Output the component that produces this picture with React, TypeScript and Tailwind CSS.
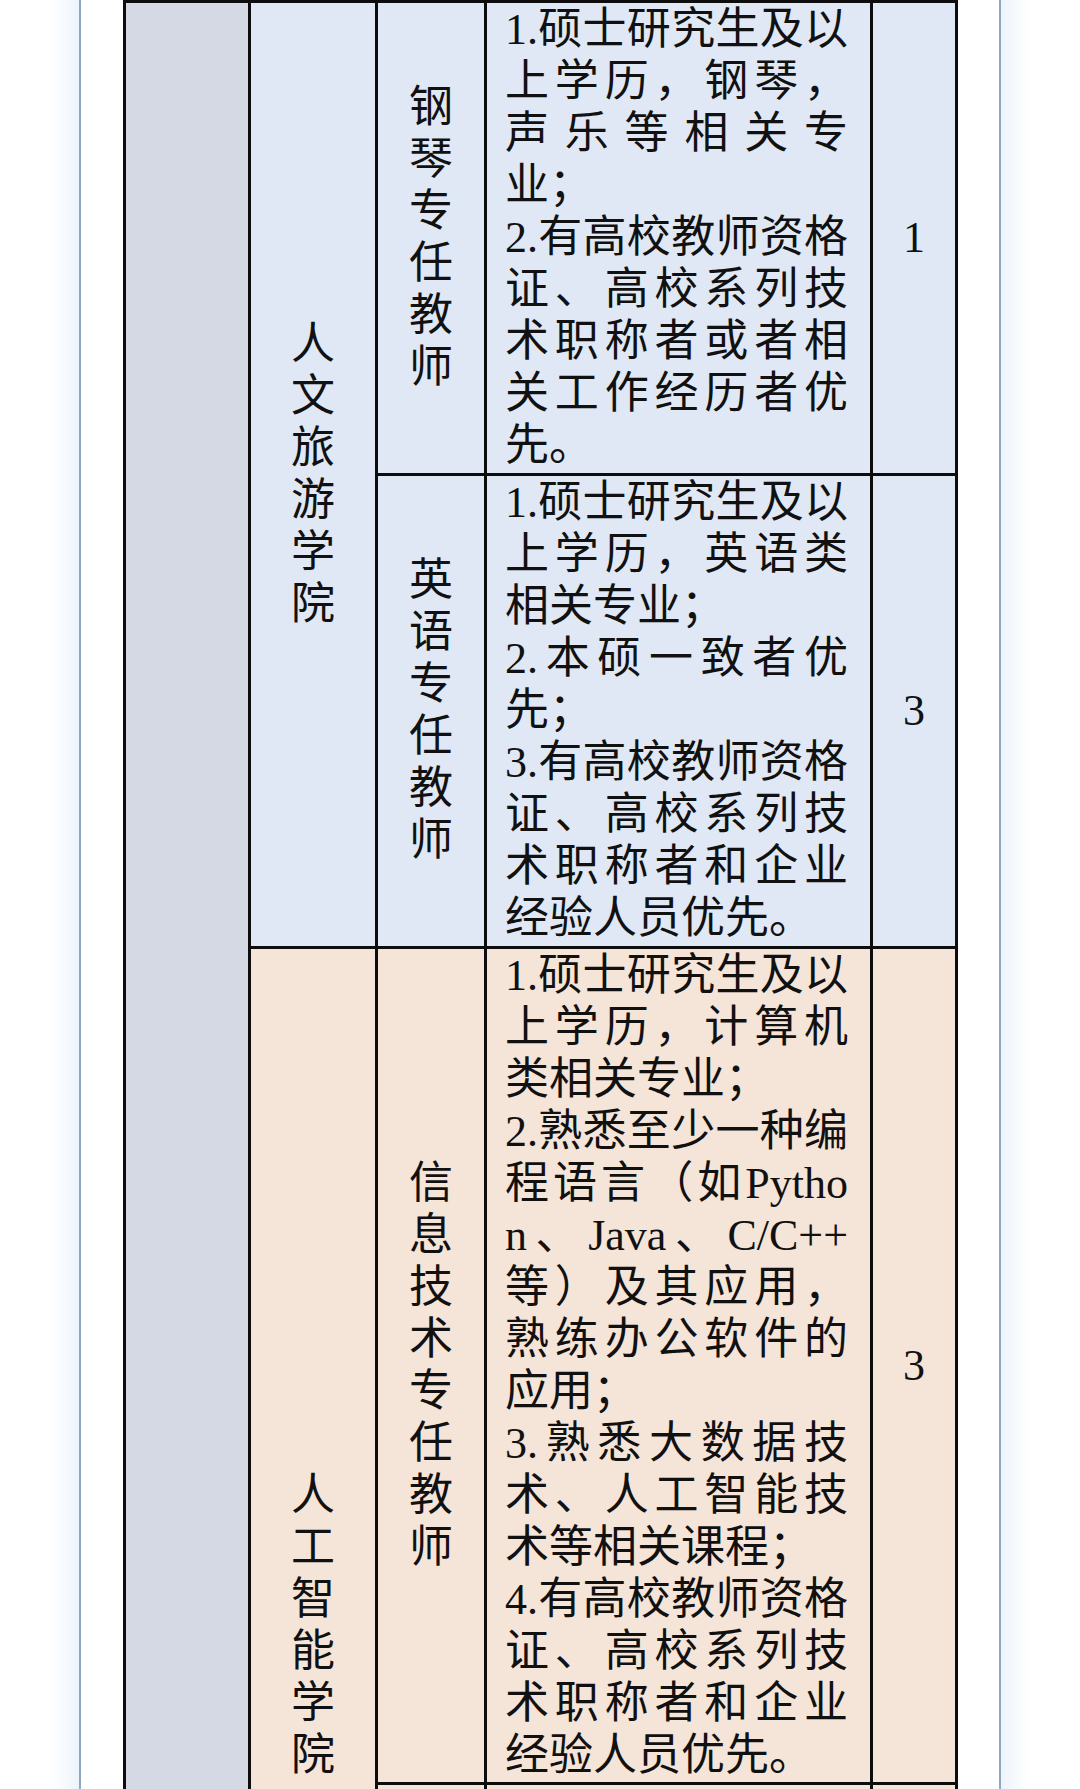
import React from 'react';

type Line = { t: string; j?: boolean };

const FONT = '"Liberation Serif", "Noto Sans CJK SC", serif';

const blueRows: { title: string; count: string; lines: Line[] }[] = [
  {
    title: '钢琴专任教师',
    count: '1',
    lines: [
      { t: '1.硕士研究生及以', j: true },
      { t: '上学历，钢琴，', j: true },
      { t: '声乐等相关专', j: true },
      { t: '业；' },
      { t: '2.有高校教师资格', j: true },
      { t: '证、高校系列技', j: true },
      { t: '术职称者或者相', j: true },
      { t: '关工作经历者优', j: true },
      { t: '先。' },
    ],
  },
  {
    title: '英语专任教师',
    count: '3',
    lines: [
      { t: '1.硕士研究生及以', j: true },
      { t: '上学历，英语类', j: true },
      { t: '相关专业；' },
      { t: '2.本硕一致者优', j: true },
      { t: '先；' },
      { t: '3.有高校教师资格', j: true },
      { t: '证、高校系列技', j: true },
      { t: '术职称者和企业', j: true },
      { t: '经验人员优先。' },
    ],
  },
];

const itLines: Line[] = [
  { t: '1.硕士研究生及以', j: true },
  { t: '上学历，计算机', j: true },
  { t: '类相关专业；' },
  { t: '2.熟悉至少一种编', j: true },
  { t: '程语言（如Pytho', j: true },
  { t: 'n、Java、C/C++', j: true },
  { t: '等）及其应用，', j: true },
  { t: '熟练办公软件的', j: true },
  { t: '应用；' },
  { t: '3.熟悉大数据技', j: true },
  { t: '术、人工智能技', j: true },
  { t: '术等相关课程；' },
  { t: '4.有高校教师资格', j: true },
  { t: '证、高校系列技', j: true },
  { t: '术职称者和企业', j: true },
  { t: '经验人员优先。' },
];

function Vertical({ text }: { text: string }) {
  return (
    <div className="flex flex-col items-center">
      {text.split('').map((c, i) => (
        <span key={i} className="block leading-[52px]">
          {c}
        </span>
      ))}
    </div>
  );
}

function Lines({ lines }: { lines: Line[] }) {
  return (
    <div className="w-[343px] ml-[18px]">
      {lines.map((l, i) => (
        <div
          key={i}
          className={
            l.j
              ? 'whitespace-nowrap leading-[52px] text-justify [text-align-last:justify]'
              : 'whitespace-nowrap leading-[52px] text-left'
          }
        >
          {l.t}
        </div>
      ))}
    </div>
  );
}

export default function App() {
  return (
    <div
      className="flex h-[1789px] w-[1080px] overflow-hidden bg-white text-[44px] text-[#111]"
      style={{ fontFamily: FONT }}
    >
      <div className="w-[79px] shrink-0 bg-linear-to-r from-white from-65% to-[#edf4fb]" />
      <div className="w-[2px] shrink-0 bg-[#8fa7c1]" />
      <div className="w-[918px] shrink-0 bg-white">
        <div className="ml-[42px] grid w-max grid-cols-[122px_124px_106px_383px_82px] grid-rows-[470px_470px_833px_518px] gap-[3px] bg-[#0d0d0d] p-[3px]">
          {/* left gray column */}
          <div className="col-start-1 row-start-1 row-span-4 bg-[#d5d9e4]" />

          {/* 人文旅游学院 */}
          <div className="col-start-2 row-start-1 row-span-2 flex items-center justify-center bg-[#dfe8f4]">
            <Vertical text="人文旅游学院" />
          </div>

          {blueRows.map((r, i) => (
            <React.Fragment key={r.title}>
              <div
                className={
                  i === 0
                    ? 'col-start-3 row-start-1 flex items-center justify-center bg-[#dfe8f4]'
                    : 'col-start-3 row-start-2 flex items-center justify-center bg-[#dfe8f4]'
                }
              >
                <Vertical text={r.title} />
              </div>
              <div
                className={
                  i === 0
                    ? 'col-start-4 row-start-1 flex items-center bg-[#dfe8f4]'
                    : 'col-start-4 row-start-2 flex items-center bg-[#dfe8f4]'
                }
              >
                <Lines lines={r.lines} />
              </div>
              <div
                className={
                  i === 0
                    ? 'col-start-5 row-start-1 flex items-center justify-center bg-[#dfe8f4]'
                    : 'col-start-5 row-start-2 flex items-center justify-center bg-[#dfe8f4]'
                }
              >
                <span className="leading-[52px]">{r.count}</span>
              </div>
            </React.Fragment>
          ))}

          {/* 人工智能学院 */}
          <div className="col-start-2 row-start-3 row-span-2 flex items-center justify-center bg-[#f5e4d8]">
            <Vertical text="人工智能学院" />
          </div>
          <div className="col-start-3 row-start-3 flex items-center justify-center bg-[#f5e4d8]">
            <Vertical text="信息技术专任教师" />
          </div>
          <div className="col-start-4 row-start-3 flex items-center bg-[#f5e4d8]">
            <Lines lines={itLines} />
          </div>
          <div className="col-start-5 row-start-3 flex items-center justify-center bg-[#f5e4d8]">
            <span className="leading-[52px]">3</span>
          </div>

          {/* next row, cut off */}
          <div className="col-start-3 row-start-4 bg-[#f5e4d8]" />
          <div className="col-start-4 row-start-4 bg-[#f5e4d8]" />
          <div className="col-start-5 row-start-4 bg-[#f5e4d8]" />
        </div>
      </div>
      <div className="w-[2px] shrink-0 bg-[#8fa7c1]" />
      <div className="w-[79px] shrink-0 bg-linear-to-l from-white from-65% to-[#edf4fb]" />
    </div>
  );
}
